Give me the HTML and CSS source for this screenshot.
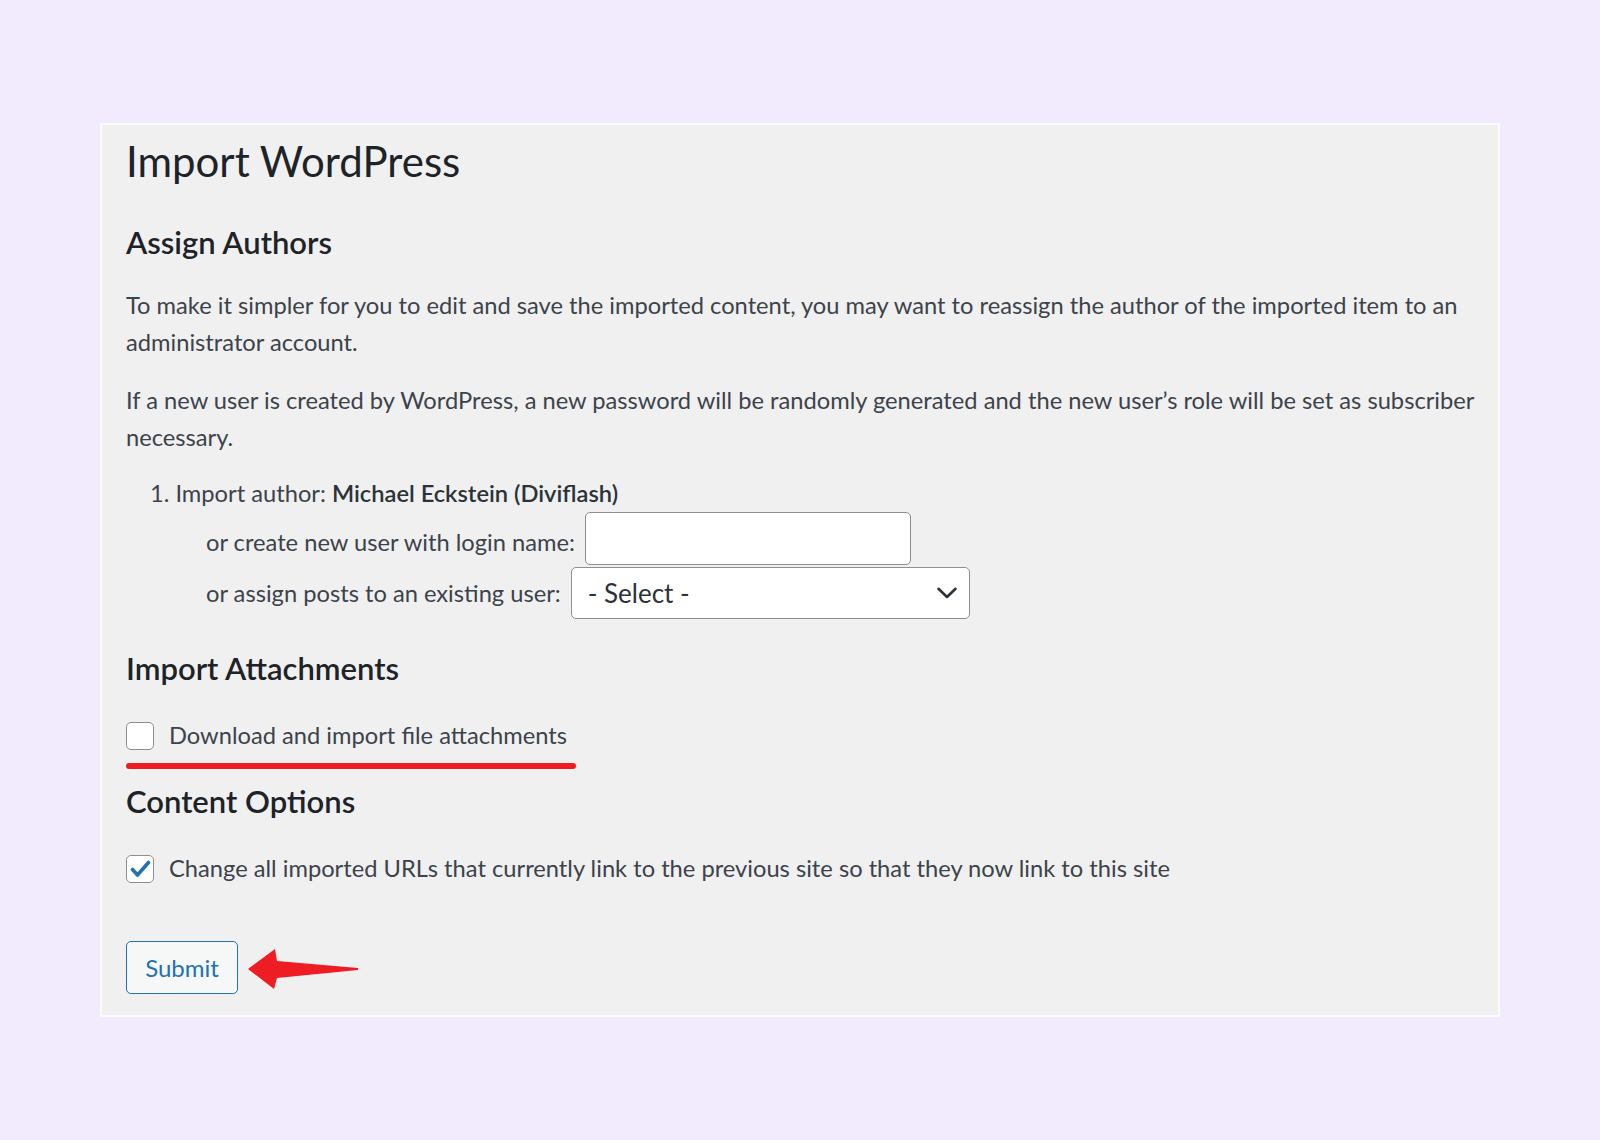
FILE: index.html
```
<!DOCTYPE html>
<html lang="en">
<head>
  <meta charset="UTF-8">
  <meta name="viewport" content="width=device-width, initial-scale=1.0">
  <title>Import WordPress</title>
  <link rel="stylesheet" href="styles.css">
</head>

<body>
  <div class="wrap">
    <h1>Import WordPress</h1>

    <h3 class="first">Assign Authors</h3>
    <p class="intro">To make it simpler for you to edit and save the imported content, you may want to reassign the author of the imported item to an administrator account.</p>
    <p>If a new user is created by WordPress, a new password will be randomly generated and the new user’s role will be set as subscriber necessary.</p>

    <ol class="authors">
      <li>Import author: <strong>Michael Eckstein (Diviflash)</strong>
        <div class="row new-user">
          <label class="row-label">or create new user with login name:</label>
          <span class="field"></span>
        </div>
        <div class="row existing">
          <label class="row-label">or assign posts to an existing user:</label>
          <span class="select">
            <span>- Select -</span>
            <svg width="20" height="12" viewBox="0 0 20 12">
              <polyline points="1.5,1.8 10,10 18.5,1.8" fill="none" stroke="#2c3338" stroke-width="2.6" stroke-linecap="round" stroke-linejoin="round"/>
            </svg>
          </span>
        </div>
      </li>
    </ol>

    <h3 class="attach">Import Attachments</h3>
    <div class="check-row attach-row">
      <span class="box"></span>
      <span>Download and import file attachments</span>
      <span class="mark"></span>
    </div>

    <h3 class="options">Content Options</h3>
    <div class="check-row urls-row">
      <span class="box">
        <svg width="28" height="28" viewBox="0 0 28 28">
          <polyline points="6.5,14.5 11.5,20 22.5,7.5" fill="none" stroke="#2271b1" stroke-width="3.6" stroke-linecap="round" stroke-linejoin="round"/>
        </svg>
      </span>
      <span>Change all imported URLs that currently link to the previous site so that they now link to this site</span>
    </div>

    <div class="submit-row">
      <button class="button">Submit</button>
      <svg class="arrow" width="112" height="40" viewBox="0 0 112 40">
        <path d="M0 20 L27 0 L29 12 L110 19 L110 21 L29 29 L26 40 Z" fill="#ee1d23"/>
      </svg>
    </div>
  </div>
</body>
</html>
```

FILE: styles.css
```
*{
  margin: 0;
  padding: 0;
  box-sizing: border-box;
}
body{
  background: #f2eafd;
  font-family: Lato, "Open Sans", sans-serif;
  font-size: 23.7px;
  line-height: 37px;
  color: #3c434a;
}
.wrap{
  width: 1400px;
  margin: 123px auto 0;
  background: #f0f0f1;
  border: 2px solid #fbfbfb;
  padding: 11px 10px 21px 24px;
}
h1{
  font-size: 42px;
  line-height: 50px;
  font-weight: 400;
  color: #1d2327;
}
h3{
  font-size: 31px;
  line-height: 37px;
  font-weight: 600;
  color: #1d2327;
}
h3.first{
  margin-top: 38px;
}
p{
  margin-top: 21px;
}
p.intro{
  margin-top: 26px;
}
.authors{
  margin-top: 19px;
  list-style: decimal inside;
  padding-left: 24px;
}
.authors strong{
  font-weight: 600;
  color: #2c3338;
}
.row{
  display: flex;
  align-items: center;
  margin-left: 56px;
}
.row-label{
  margin-right: 10px;
}
.new-user .row-label{
  padding-top: 8px;
}
.field{
  display: block;
  width: 326px;
  height: 53px;
  background: #fff;
  border: 1px solid #8c8f94;
  border-radius: 5px;
}
.existing{
  margin-top: 2px;
}
.select{
  display: flex;
  align-items: center;
  justify-content: space-between;
  width: 399px;
  height: 52px;
  background: #fff;
  border: 1px solid #8c8f94;
  border-radius: 5px;
  padding: 0 12px 0 16px;
  font-size: 26px;
  color: #2c3338;
}
h3.attach{
  margin-top: 31px;
}
.check-row{
  position: relative;
  display: flex;
  align-items: center;
  gap: 15px;
  margin-top: 30px;
}
.box{
  display: block;
  width: 28px;
  height: 28px;
  background: #fff;
  border: 1px solid #8c8f94;
  border-radius: 5px;
  overflow: hidden;
}
.box svg{
  display: block;
  margin: -1px;
}
.mark{
  position: absolute;
  left: 0;
  top: 46px;
  width: 450px;
  height: 6px;
  border-radius: 3px;
  background: #ee1d23;
}
h3.options{
  margin-top: 29px;
}
.submit-row{
  display: flex;
  align-items: center;
  gap: 10px;
  margin-top: 54px;
}
.button{
  height: 53px;
  width: 112px;
  font-family: inherit;
  font-size: 24px;
  color: #2271b1;
  background: #f6f7f7;
  border: 1px solid #2271b1;
  border-radius: 5px;
  cursor: pointer;
}
.arrow{
  display: block;
  margin-top: 3px;
}
```
